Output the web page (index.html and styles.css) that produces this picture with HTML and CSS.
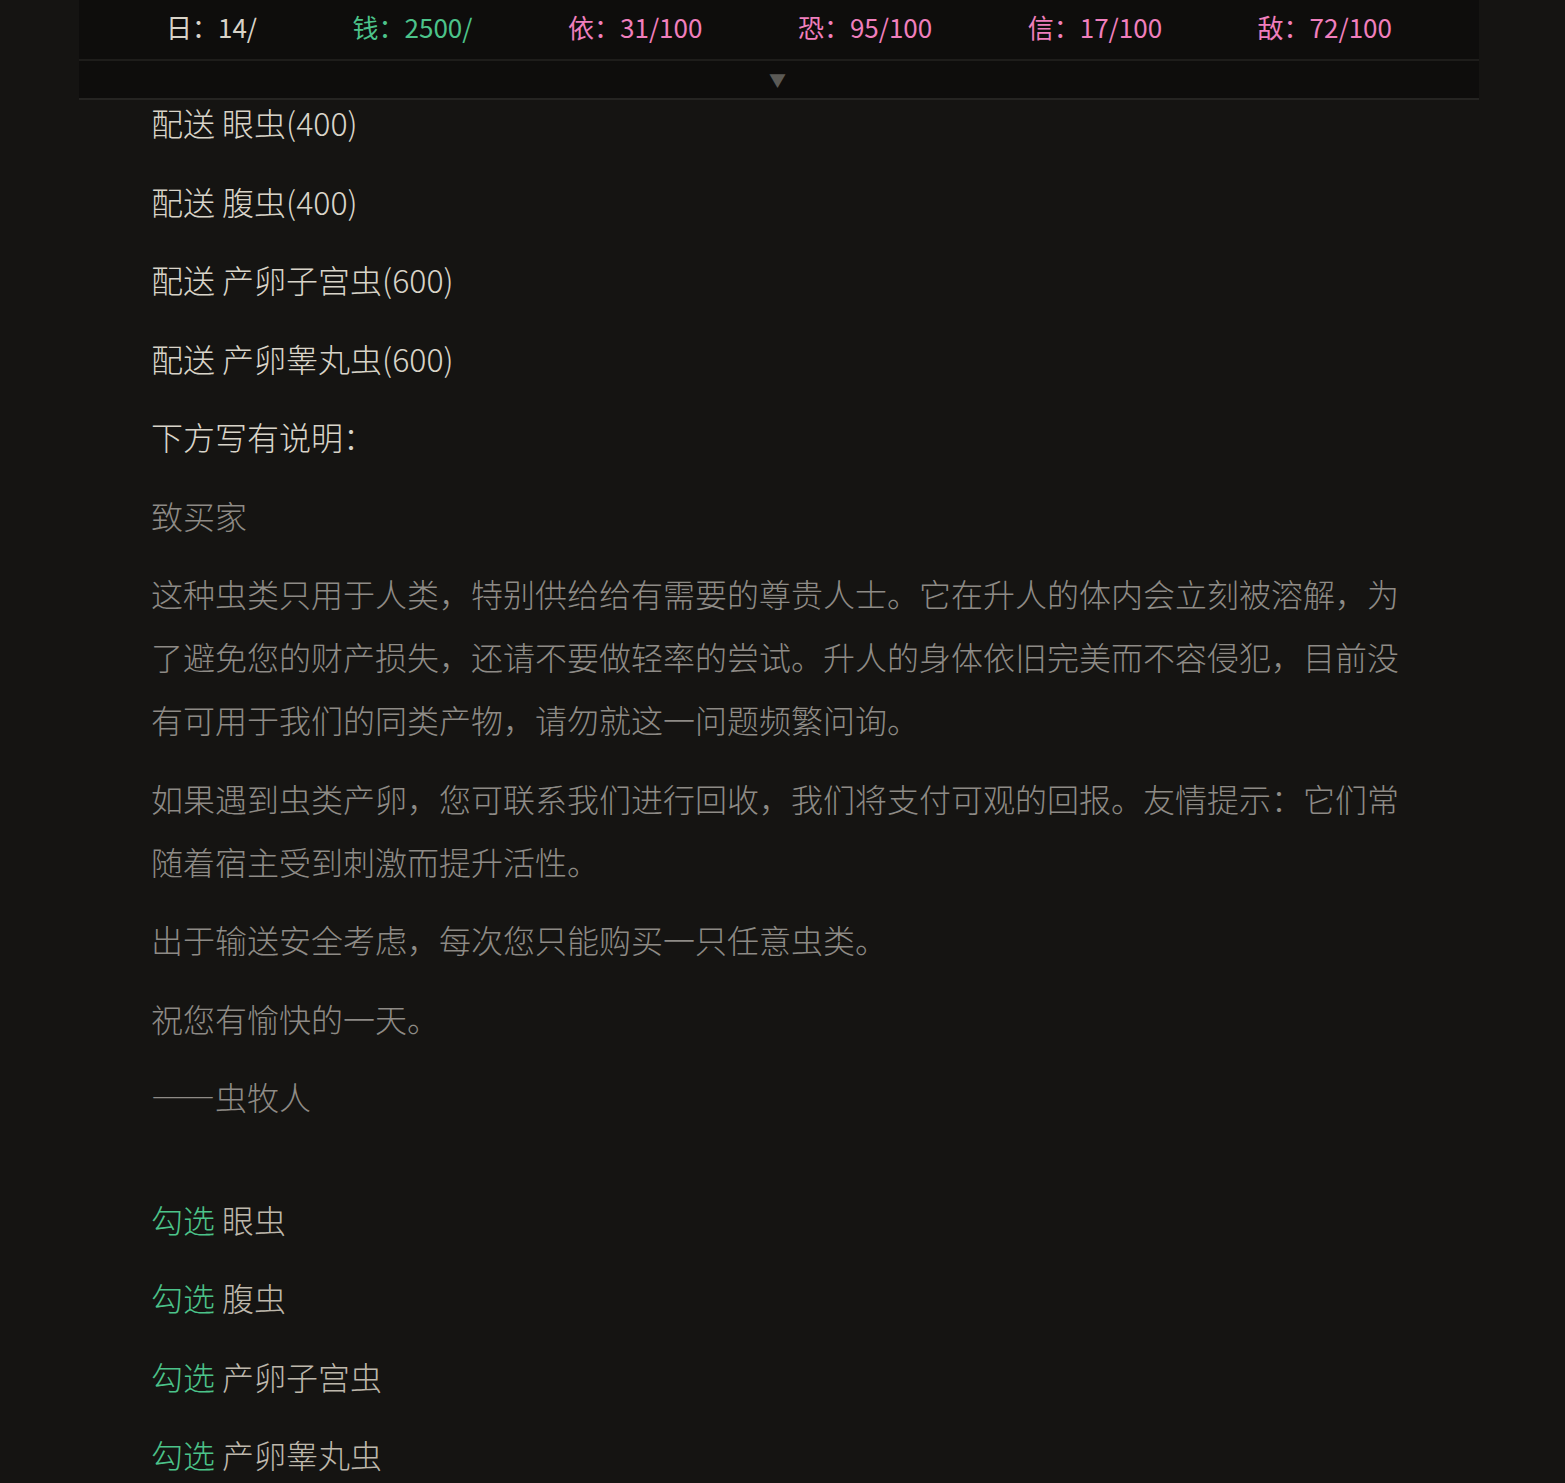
FILE: index.html
```html
<!DOCTYPE html>
<html lang="zh-CN">
<head>
<meta charset="UTF-8">
<meta name="viewport" content="width=device-width, initial-scale=1.0">
<title>虫牧人</title>
<link rel="stylesheet" href="styles.css">
</head>
<body>

<div class="wrap">
    <!-- Status Bar -->
    <header class="status">
        <div class="stats">
            <span class="stat day">日：14/</span>
            <span class="stat money">钱：2500/</span>
            <span class="stat pink">依：31/100</span>
            <span class="stat pink">恐：95/100</span>
            <span class="stat pink">信：17/100</span>
            <span class="stat pink">敌：72/100</span>
        </div>
        <div class="toggle">&#9660;</div>
    </header>

    <!-- Story Text -->
    <main class="story">
        <p class="bright">配送 眼虫(400)</p>
        <p class="bright">配送 腹虫(400)</p>
        <p class="bright">配送 产卵子宫虫(600)</p>
        <p class="bright">配送 产卵睾丸虫(600)</p>
        <p class="bright">下方写有说明：</p>
        <p class="note">致买家</p>
        <p class="note">这种虫类只用于人类，特别供给给有需要的尊贵人士。它在升人的体内会立刻被溶解，为了避免您的财产损失，还请不要做轻率的尝试。升人的身体依旧完美而不容侵犯，目前没有可用于我们的同类产物，请勿就这一问题频繁问询。</p>
        <p class="note">如果遇到虫类产卵，您可联系我们进行回收，我们将支付可观的回报。友情提示：它们常随着宿主受到刺激而提升活性。</p>
        <p class="note">出于输送安全考虑，每次您只能购买一只任意虫类。</p>
        <p class="note">祝您有愉快的一天。</p>
        <p class="note">——虫牧人</p>

        <div class="choices">
            <p class="choice"><span class="pick">勾选</span> 眼虫</p>
            <p class="choice"><span class="pick">勾选</span> 腹虫</p>
            <p class="choice"><span class="pick">勾选</span> 产卵子宫虫</p>
            <p class="choice"><span class="pick">勾选</span> 产卵睾丸虫</p>
        </div>
    </main>
</div>

</body>
</html>
```

FILE: styles.css
```css
/* Basic Styles */
body {
    margin: 0;
    padding: 0;
    background-color: #151412;
    font-family: "Noto Sans CJK SC", "Noto Sans", sans-serif;
    font-weight: 300;
    color: #d8d3c8;
}
.wrap {
    width: 1400px;
    margin: 0 79px;
}
/* Status Bar */
.status {
    position: sticky;
    top: 0;
    z-index: 2;
    background-color: #0e0d0c;
}
.stats {
    display: flex;
    justify-content: space-between;
    align-items: center;
    height: 53px;
    padding: 0 87px 6px 87px;
    border-bottom: 2px solid #1e1d1b;
    font-size: 26px;
    font-weight: 400;
}
.stat {
    white-space: nowrap;
}
.day {
    color: #d8d3c8;
}
.money {
    color: #4cc38a;
}
.pink {
    color: #f07fbd;
}
.toggle {
    height: 37px;
    line-height: 37px;
    text-align: center;
    font-size: 17px;
    color: #5b5a56;
    border-bottom: 2px solid #252422;
    padding-right: 3px;
}
/* Story */
.story {
    margin-top: -9px;
    padding: 0 72px 40px;
    font-size: 32px;
    line-height: 63px;
}
.story p {
    margin: 0 0 15.5px;
}
.bright {
    color: #d9d4c9;
}
.note {
    color: #8e8b86;
}
.choices {
    margin-top: 59.5px;
}
.choice {
    color: #beb8ac;
}
.pick {
    color: #4cc38a;
}
```
